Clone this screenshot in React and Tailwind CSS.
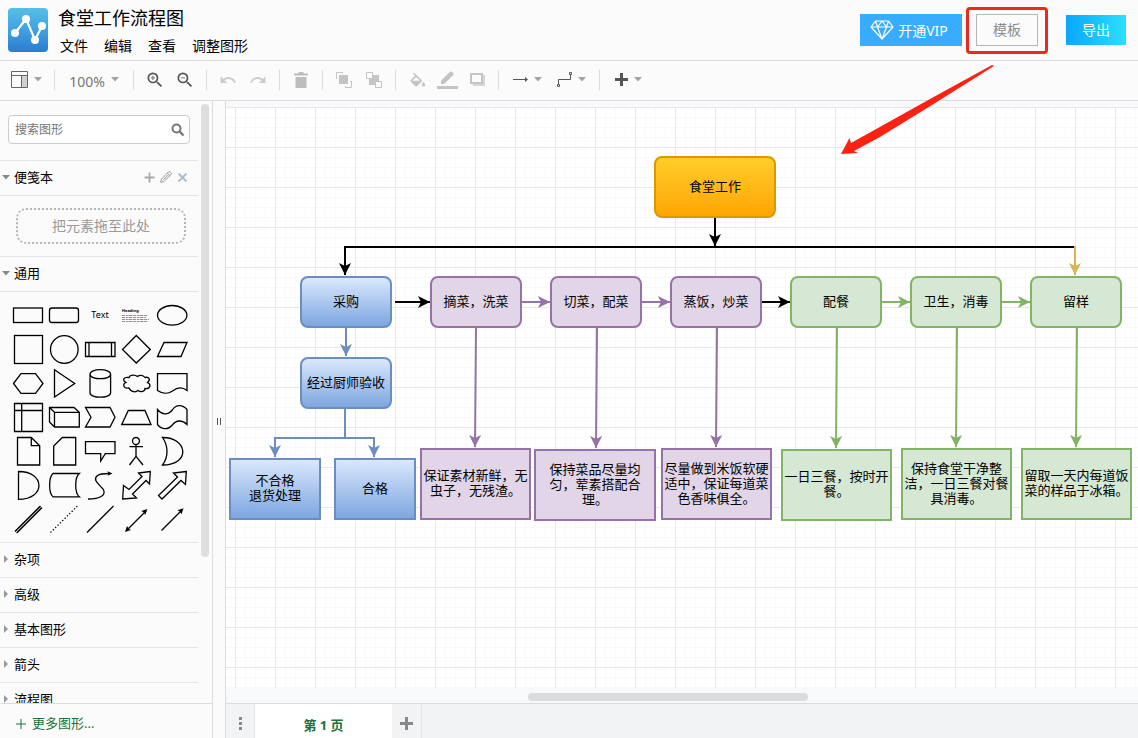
import React from 'react';
import { MdZoomIn, MdZoomOut } from 'react-icons/md';

const menus = ['文件', '编辑', '查看', '调整图形'];

const collapsedSections = ['杂项', '高级', '基本图形', '箭头', '流程图'];

const palettes = {
  orange: 'bg-gradient-to-b from-[#ffcd28] to-[#ffa500] border-[#d79b00]',
  blue: 'bg-gradient-to-b from-[#dae8fc] to-[#7ea6e0] border-[#6c8ebf]',
  purple: 'bg-[#e1d5e7] border-[#9673a6]',
  green: 'bg-[#d5e8d4] border-[#82b366]',
};

// x / y are canvas coordinates, measured from the top left of the grid
const nodes = [
  { x: 428, y: 49, w: 122, h: 62, color: 'orange', rounded: true, text: '食堂工作' },
  { x: 74, y: 169, w: 92, h: 52, color: 'blue', rounded: true, text: '采购' },
  { x: 204, y: 169, w: 92, h: 52, color: 'purple', rounded: true, text: '摘菜，洗菜' },
  { x: 324, y: 169, w: 92, h: 52, color: 'purple', rounded: true, text: '切菜，配菜' },
  { x: 444, y: 169, w: 92, h: 52, color: 'purple', rounded: true, text: '蒸饭，炒菜' },
  { x: 564, y: 169, w: 92, h: 52, color: 'green', rounded: true, text: '配餐' },
  { x: 684, y: 169, w: 92, h: 52, color: 'green', rounded: true, text: '卫生，消毒' },
  { x: 804, y: 169, w: 92, h: 52, color: 'green', rounded: true, text: '留样' },
  { x: 74, y: 250, w: 92, h: 52, color: 'blue', rounded: true, text: '经过厨师验收' },
  { x: 3, y: 351, w: 92, h: 62, color: 'blue', text: '不合格\n退货处理' },
  { x: 108, y: 351, w: 82, h: 62, color: 'blue', text: '合格' },
  { x: 194, y: 341, w: 111, h: 72, color: 'purple', text: '保证素材新鲜，无\n虫子，无残渣。' },
  { x: 308, y: 342, w: 122, h: 72, color: 'purple', text: '保持菜品尽量均\n匀，荤素搭配合\n理。' },
  { x: 435, y: 341, w: 111, h: 72, color: 'purple', text: '尽量做到米饭软硬\n适中，保证每道菜\n色香味俱全。' },
  { x: 555, y: 342, w: 111, h: 72, color: 'green', text: '一日三餐，按时开\n餐。' },
  { x: 675, y: 341, w: 111, h: 72, color: 'green', text: '保持食堂干净整\n洁，一日三餐对餐\n具消毒。' },
  { x: 795, y: 341, w: 111, h: 72, color: 'green', text: '留取一天内每道饭\n菜的样品于冰箱。' },
];

const edgeColors = {
  black: '#000000',
  blue: '#6c8ebf',
  purple: '#9673a6',
  green: '#82b366',
  yellow: '#d6b656',
};

const edges = [
  { d: 'M489 111V139', color: 'black' },
  { d: 'M849 140H119V168', color: 'black' },
  { d: 'M849 139V168', color: 'yellow' },
  { d: 'M169 195H204', color: 'black' },
  { d: 'M296 195H324', color: 'purple' },
  { d: 'M416 195H444', color: 'purple' },
  { d: 'M536 195H564', color: 'black' },
  { d: 'M656 195H684', color: 'green' },
  { d: 'M776 195H804', color: 'green' },
  { d: 'M120 221V249', color: 'blue' },
  { d: 'M119 302V331H49V350', color: 'blue' },
  { d: 'M119 331H148V350', color: 'blue' },
  { d: 'M250 221L249 340', color: 'purple' },
  { d: 'M371 221L370 341', color: 'purple' },
  { d: 'M491 221L490 340', color: 'purple' },
  { d: 'M611 221L610 341', color: 'green' },
  { d: 'M731 221L730 340', color: 'green' },
  { d: 'M851 221L850 340', color: 'green' },
];

// Palette thumbnails, each drawn in a 36 x 34 cell
const shapes = [
  { name: '矩形', art: <rect x="3.5" y="10" width="29" height="14.5" /> },
  { name: '圆角矩形', art: <rect x="3.5" y="10" width="29" height="14.5" rx="2.5" /> },
  { name: '文本', label: 'text' },
  { name: '文本框', label: 'heading' },
  { name: '椭圆', art: <ellipse cx="18.2" cy="17.3" rx="14.7" ry="9.8" /> },
  { name: '正方形', art: <rect x="4.5" y="3.5" width="28" height="28" /> },
  { name: '圆', art: <circle cx="18.3" cy="17.5" r="13.8" /> },
  { name: '流程', art: <path d="M3.5 10.5H33V24.5H3.5zM7 10.5V24.5M29.5 10.5V24.5" /> },
  { name: '菱形', art: <path d="M18.3 3.5L32.3 17.5 18.3 31 4.5 17.5z" /> },
  { name: '平行四边形', art: <path d="M3.5 24.5L10 10.5H33L27 24.5z" /> },
  { name: '六边形', art: <path d="M3.5 17.5L11 7.7H25.5L33 17.5 25.5 27.3H11z" /> },
  { name: '三角形', art: <path d="M8.5 3.8L28.7 17.5 8.5 31z" /> },
  { name: '圆柱体', art: <path d="M8 8.2C8 2.2 28.6 2.2 28.6 8.2V26.7C28.6 32.7 8 32.7 8 26.7zM8 8.2C8 14.2 28.6 14.2 28.6 8.2" /> },
  { name: '云', art: <path d="M11 11.500C6 10.500 3.500 14 8 16.500C4 18 5.500 23 11 22C13 26.500 18 26.500 20 24.500C23 26.500 27 25.500 27 22.500C32.500 23 33.500 18.500 29.500 16.500C33 13.500 31 10.500 27 11.500C25 8.500 21 9 19.500 10.500C17 8.500 12 8.500 11 11.500z" /> },
  { name: '文档', art: <path d="M3.5 7.7H33V24.5C28 20.5 23 21.5 18.5 25C14 28.2 8 27.5 3.5 24.5z" /> },
  { name: '内部存储', art: <path d="M4.5 3.5H32.5V31.5H4.5zM11.7 3.5V31.5M4.5 10.5H32.5" /> },
  { name: '立方体', art: <path d="M3.5 7.5H28L33.3 12.3V27H8.5L3.5 22zM3.5 7.5L8.5 12.3V27M8.5 12.3H33.3" /> },
  { name: '步骤', art: <path d="M3.5 7.5H28L33 17.3 28 27H3.5L9 17.3z" /> },
  { name: '梯形', art: <path d="M3.7 24.5L10.3 10.5H27L33 24.5z" /> },
  { name: '磁带', art: <path d="M3.5 9.5C8 15 14 15.5 18.3 10C22 4.5 28 4 33 9.5V24.5C28 19.5 22 20 18.3 25C14 30 8 30 3.5 24.5z" /> },
  { name: '便签', art: <path d="M7.5 3.5H21.3L29.7 11.7V31H7.5zM21.3 3.5V11.7H29.7" /> },
  { name: '卡片', art: <path d="M16.3 3.5H29.7V31H7.7V12z" /> },
  { name: '标注', art: <path d="M3.5 7.7H33V19.7H23.3L18.7 27V19.7H3.5z" /> },
  { name: '角色', art: <path d="M21.5 7A3.5 3.5 0 1 1 14.5 7A3.5 3.5 0 1 1 21.5 7zM18 10.5V22.3M11.5 12.7H25M18 22.3L11.5 31M18 22.3L25 31" /> },
  { name: '或', art: <path d="M8.5 3.5C34 3.5 37 31 8.5 31C14.5 23 14.5 12 8.5 3.5z" /> },
  { name: '与', art: <path d="M8.5 3.5C35.5 3.5 36 31.3 8.5 31.3z" /> },
  { name: '数据存储', art: <path d="M7 5.5H33.3C28.5 9.5 28.5 25 33.3 28.8H7C2.5 25 2.5 9.5 7 5.5z" /> },
  { name: '曲线', art: <><path d="M6 31C18 31 25 27 21 21C17 16 10 12 15.5 7.5C18 5.7 22 5.5 27 5.5" /><path d="M30.500 5.500L25.500 3.300L26.500 5.500L25.500 7.700z" fill="#000" stroke="none" /></> },
  { name: '双向箭头', art: <path d="M32.300 3.500L20.500 5L24 8.500L11 21.500L5.500 17.500L4.700 31L18.500 30L14.500 26L28 12.500L31.500 16z" /> },
  { name: '箭头', art: <path d="M32.300 3.500L19.500 5L23.500 9L4.500 27.500L8 31L27 12.500L31.500 16.500z" /> },
  { name: '连接', art: <path d="M5 29.500L30.500 4M6.700 31L32 5.500" strokeWidth="1.500" /> },
  { name: '虚线', art: <path d="M4.500 30.500L31.500 4" strokeDasharray="1.300 2" /> },
  { name: '直线', art: <path d="M5 30.500L31.500 4" /> },
  { name: '双向连接', art: <><path d="M9 28L28 9" /><path d="M7 30L9 24L10.500 26.500L13 28zM29.300 7L27.300 13L25.800 10.500L23.300 9z" fill="#000" stroke="none" /></> },
  { name: '定向连接', art: <><path d="M7.500 28.500L27.500 8.500" /><path d="M29.500 6.300L27.500 12.300L26 9.800L23.500 8.300z" fill="#000" stroke="none" /></> },
];

const Caret = ({ className = 'text-[#a3a3a3]' }) => (
  <svg className={`w-2 h-[5px] shrink-0 ${className}`} viewBox="0 0 8 5" fill="currentColor">
    <path d="M0 0H8L4 4.5z" />
  </svg>
);

const CaretRight = () => (
  <svg className="w-2 h-2 shrink-0 text-[#999]" viewBox="0 0 8 8" fill="currentColor">
    <path d="M2 0L6 4L2 8z" />
  </svg>
);

const Logo = () => (
  <svg className="w-10 h-11 shrink-0" viewBox="0 0 40 44">
    <defs>
      <linearGradient id="logoFill" x1="0" y1="0" x2="0" y2="1">
        <stop offset="0" stopColor="#55bfe6" />
        <stop offset="0.5" stopColor="#3fa2e0" />
        <stop offset="1" stopColor="#2e7bd0" />
      </linearGradient>
    </defs>
    <rect width="40" height="44" rx="4" fill="url(#logoFill)" />
    <path d="M7 25L18 11L27 32L34 18" fill="none" stroke="#fff" strokeWidth="2.2" />
    <g fill="#fff">
      <circle cx="7" cy="25" r="4" />
      <circle cx="18" cy="11" r="4" />
      <circle cx="27" cy="32" r="4" />
      <circle cx="34" cy="18" r="4" />
    </g>
  </svg>
);

const DiamondIcon = () => (
  <svg className="w-6 h-5 shrink-0" viewBox="0 0 24 20" fill="none" stroke="#fff" strokeWidth="1.2" strokeLinejoin="round">
    <path d="M5.5 1H18.5L23 7L12 19L1 7zM1 7H23M5.5 1L7.5 7L12 1L16.5 7L18.5 1M7.5 7L12 19L16.5 7" />
  </svg>
);

const ToolGroup = ({ children, first, last }) => (
  <>
    <div className={`flex items-center pr-1.5 ${first ? 'pl-1' : 'pl-1.5'}`}>{children}</div>
    {!last && <div className="w-px h-5 bg-[#dcdcdc]" />}
  </>
);

const ToolButton = ({ label, children, wide }) => (
  <button
    aria-label={label}
    className={`h-8 flex items-center justify-center gap-1.5 ${wide ? 'w-11' : 'w-[30px]'}`}
  >
    {children}
  </button>
);

const Header = () => (
  <header className="h-[61px] shrink-0 border-b border-[#dadce0] flex items-center justify-between pl-2 pr-3">
    <div className="flex items-center gap-2.5">
      <Logo />
      <div className="flex flex-col gap-1 pt-1">
        <h1 className="text-lg leading-6 text-black">食堂工作流程图</h1>
        <nav className="flex gap-4 pl-0.5">
          {menus.map((menu) => (
            <button key={menu} className="text-sm leading-6 text-black">{menu}</button>
          ))}
        </nav>
      </div>
    </div>

    <div className="flex items-center">
      <button className="w-[102px] h-8 pr-1 bg-[#38adff] text-white text-sm flex items-center justify-center gap-1">
        <DiamondIcon />
        <span className="pt-0.5">开通VIP</span>
      </button>
      {/* Highlighted template button */}
      <div className="ml-1 mr-[18px] w-[82px] h-[47px] border-3 border-[#ea2a20] rounded flex items-center justify-center">
        <button className="w-[62px] h-8 border border-[#b5b5b5] text-sm text-[#8c8c8c]">模板</button>
      </div>
      <button className="w-[60px] h-[30px] bg-gradient-to-r from-[#0ba6ff] to-[#2be0fd] text-sm text-white">导出</button>
    </div>
  </header>
);

const Toolbar = () => (
  <div className="h-10 pb-0.5 shrink-0 border-b border-[#dadce0] flex items-center">
    <ToolGroup first>
      <ToolButton label="视图" wide>
        <svg className="w-[17px] h-[17px]" viewBox="0 0 17 17" fill="none" stroke="#666">
          <rect x="10.5" y="4.5" width="6" height="12" fill="#d0d0d0" stroke="none" />
          <path d="M0.5 0.5H16.5V16.5H0.5zM0.5 4.5H16.5M10.5 4.5V16.5" />
        </svg>
        <Caret />
      </ToolButton>
    </ToolGroup>
    <ToolGroup>
      <button className="w-[66px] h-8 flex items-center justify-center gap-1.5">
        <span className="text-sm leading-4 pt-1 text-[#777]">100%</span>
        <Caret />
      </button>
    </ToolGroup>
    <ToolGroup>
      <ToolButton label="放大"><MdZoomIn className="w-5 h-5 text-[#555]" /></ToolButton>
      <ToolButton label="缩小"><MdZoomOut className="w-5 h-5 text-[#555]" /></ToolButton>
    </ToolGroup>
    <ToolGroup>
      <ToolButton label="撤销">
        <svg className="w-[18px] h-[18px]" viewBox="0 0 24 24" fill="#ccc">
          <path d="M12.5 8c-2.650 0-5.050.990-6.900 2.600L2 7v9h9l-3.620-3.620c1.390-1.160 3.160-1.880 5.120-1.880 3.540 0 6.550 2.310 7.600 5.500l2.370-.780C21.080 11.030 17.150 8 12.500 8z" />
        </svg>
      </ToolButton>
      <ToolButton label="重做">
        <svg className="w-[18px] h-[18px]" viewBox="0 0 24 24" fill="#ccc">
          <path d="M18.400 10.600C16.550 8.990 14.150 8 11.500 8c-4.650 0-8.580 3.030-9.960 7.220L3.900 16c1.050-3.190 4.050-5.500 7.600-5.500 1.950 0 3.730.720 5.120 1.880L13 16h9V7l-3.600 3.600z" />
        </svg>
      </ToolButton>
    </ToolGroup>
    <ToolGroup>
      <ToolButton label="删除">
        <svg className="w-3.5 h-4" viewBox="0 0 14 16" fill="#bdbdbd">
          <path d="M0 1.5H4L5 0H9L10 1.5H14V3.5H0zM1.5 5H12.5V16H1.5z" />
        </svg>
      </ToolButton>
    </ToolGroup>
    <ToolGroup>
      <ToolButton label="移至最前">
        <svg className="w-4 h-4" viewBox="0 0 16 16" fill="none" stroke="#c4c4c4">
          <path d="M1.5 6.5H0.5V0.5H6.5V1.5M14 9.5H15.5V15.5H9.5V14" />
          <rect x="3" y="3" width="9" height="9" fill="#c4c4c4" stroke="none" />
        </svg>
      </ToolButton>
      <ToolButton label="移至最后">
        <svg className="w-4 h-4" viewBox="0 0 16 16" stroke="#c4c4c4">
          <rect x="3" y="3" width="10" height="10" fill="#c4c4c4" stroke="none" />
          <path d="M0.5 0.5H6.5V6.5H0.5zM9.5 9.5H15.5V15.5H9.5z" fill="#fbfbfb" />
        </svg>
      </ToolButton>
    </ToolGroup>
    <ToolGroup>
      <ToolButton label="填充颜色">
        <svg className="w-[18px] h-[18px]" viewBox="0 -2 22 22" fill="#c4c4c4">
          <path d="M16.560 8.940L7.620 0 6.210 1.410l2.380 2.380-5.150 5.150a1.490 1.490 0 0 0 0 2.120l5.500 5.500c.290.290.680.440 1.060.440s.770-.150 1.060-.440l5.500-5.500c.590-.580.590-1.530 0-2.120zM5.210 10L10 5.210 14.790 10H5.210zM19 11.500s-2 2.170-2 3.500c0 1.100.900 2 2 2s2-.900 2-2c0-1.330-2-3.500-2-3.500z" />
        </svg>
      </ToolButton>
      <ToolButton label="线条颜色">
        <svg className="w-[21px] h-[18px]" viewBox="0 0 21 18" fill="#c4c4c4">
          <path d="M4 13V9.800L13 0.800Q14 0 15 0.800L16.500 2.300Q17 3 16.200 4L7.200 13zM0 15H21V18H0z" />
        </svg>
      </ToolButton>
      <ToolButton label="阴影">
        <svg className="w-[15px] h-[13px]" viewBox="0 0 15 13">
          <rect x="3" y="2" width="12" height="11" fill="#d6d6d6" />
          <rect x="1" y="1" width="11" height="9" fill="#fbfbfb" stroke="#c4c4c4" strokeWidth="2" />
        </svg>
      </ToolButton>
    </ToolGroup>
    <ToolGroup>
      <ToolButton label="连接" wide>
        <svg className="w-[15px] h-[5px]" viewBox="0 0 15 5" fill="#555">
          <path d="M0 2H12V0L15 2.5L12 5V3H0z" />
        </svg>
        <Caret />
      </ToolButton>
      <ToolButton label="航点" wide>
        <svg className="w-[15px] h-[15px]" viewBox="0 0 15 15" fill="none" stroke="#555">
          <path d="M12.5 0.5H14.5V2.5H12.5zM0.5 12.5H2.5V14.5H0.5zM1.5 12.5V7.5H13.5V3" />
        </svg>
        <Caret />
      </ToolButton>
    </ToolGroup>
    <ToolGroup last>
      <ToolButton label="插入" wide>
        <svg className="w-[13px] h-[13px]" viewBox="0 0 13 13" fill="#555">
          <path d="M5 0H8V5H13V8H8V13H5V8H0V5H5z" />
        </svg>
        <Caret />
      </ToolButton>
    </ToolGroup>
  </div>
);

const SectionTitle = ({ title, open, children }) => (
  <div className="h-[35px] pb-0.5 shrink-0 border-b border-[#e5e5e5] flex items-center justify-between pl-0.5 pr-2.5">
    <button className="flex items-center gap-1 text-[13px] leading-5 text-black" aria-expanded={!!open}>
      {open ? <Caret className="text-[#8a8a8a]" /> : <CaretRight />}
      {title}
    </button>
    {children}
  </div>
);

const ShapeCell = ({ shape }) => (
  <button title={shape.name} aria-label={shape.name} className="w-9 h-[34px] flex items-center justify-center">
    {shape.label === 'text' && <span className="text-[9px] leading-3 text-black">Text</span>}
    {shape.label === 'heading' && (
      <span className="w-7 flex flex-col items-start">
        <span className="text-[4px] leading-[6px] font-bold text-black">Heading</span>
        <svg className="w-7 h-2" viewBox="0 0 28 8" stroke="#544" strokeWidth="0.6" strokeDasharray="3 0.8 2 0.6 4 0.7">
          <path d="M0 1.5H26M0 3.5H24M0 5.5H27M0 7.5H26" />
        </svg>
      </span>
    )}
    {shape.art && (
      <svg className="w-9 h-[34px]" viewBox="0 0 36 34" fill="none" stroke="#000" strokeWidth="1.3">
        {shape.art}
      </svg>
    )}
  </button>
);

const Sidebar = () => (
  <aside className="w-[213px] shrink-0 border-r border-[#dadce0] flex flex-col">
    <div className="flex-1 min-h-0 flex">
      <div className="flex-1 min-w-0 overflow-hidden flex flex-col">
        {/* Search */}
        <div className="h-[60px] shrink-0 border-b border-[#e5e5e5] px-2 pt-3.5">
          <label className="h-[29px] bg-white border border-[#ccc] rounded flex items-center pl-1.5 pr-1">
            <input
              type="text"
              aria-label="搜索图形"
              placeholder="搜索图形"
              className="flex-1 min-w-0 text-xs text-black placeholder:text-[#757575] outline-none bg-transparent"
            />
            <svg className="w-3.5 h-3.5" viewBox="0 0 14 14" fill="none" stroke="#777" strokeWidth="2">
              <circle cx="5.5" cy="5.5" r="4" />
              <path d="M8.5 8.5L12.5 12.5" strokeWidth="2.4" />
            </svg>
          </label>
        </div>

        <SectionTitle title="便笺本" open>
          <div className="flex items-center gap-[5px]">
            <button aria-label="添加">
              <svg className="w-[11px] h-[11px]" viewBox="0 0 11 11" stroke="#aaa" strokeWidth="1.8">
                <path d="M5.5 0.5V10.5M0.5 5.5H10.5" />
              </svg>
            </button>
            <button aria-label="编辑">
              <svg className="w-3 h-3" viewBox="0 0 12 12" fill="none" stroke="#999">
                <path d="M0.7 11.3L1.5 8L8.5 1Q9.5 0.2 10.5 1.2Q11.8 2.5 11 3.5L4 10.5zM7.3 2.2L9.8 4.7M3.5 8.7L8.7 3.5" />
              </svg>
            </button>
            <button aria-label="关闭">
              <svg className="w-[11px] h-[11px]" viewBox="0 0 11 11" stroke="#a9c0d3" strokeWidth="1.9">
                <path d="M1.5 1.5L9.5 9.5M9.5 1.5L1.5 9.5" />
              </svg>
            </button>
          </div>
        </SectionTitle>
        <div className="h-[61px] shrink-0 border-b border-[#e5e5e5] pl-4 pr-3 pt-3">
          <div className="h-9 border-2 border-dotted border-[#b5b5b5] rounded-[10px] flex items-center justify-center text-sm text-[#999]">
            把元素拖至此处
          </div>
        </div>

        <SectionTitle title="通用" open />
        <div className="shrink-0 border-b border-[#e5e5e5] pl-2.5 py-1.5">
          <div className="grid grid-cols-[repeat(5,36px)]">
            {shapes.map((shape) => (
              <ShapeCell key={shape.name} shape={shape} />
            ))}
          </div>
        </div>

        {collapsedSections.map((title) => (
          <SectionTitle key={title} title={title} />
        ))}
      </div>
      {/* Scrollbar */}
      <div className="w-3.5 shrink-0 pl-[3px] pt-[3px]">
        <div className="w-2 h-[453px] rounded bg-[#dedede]" />
      </div>
    </div>

    <button className="h-[35px] shrink-0 border-t border-[#dadce0] flex items-center gap-1.5 pl-4 pt-1.5 text-[13px] text-[#1e7038]">
      <svg className="w-2.5 h-2.5" viewBox="0 0 10 10" stroke="currentColor">
        <path d="M5 0V10M0 5H10" />
      </svg>
      更多图形...
    </button>
  </aside>
);

const Diagram = () => (
  <div className="relative flex-1 min-h-0 overflow-hidden bg-white bg-[linear-gradient(to_right,#e9e9e9_1px,transparent_1px),linear-gradient(to_bottom,#e9e9e9_1px,transparent_1px),linear-gradient(to_right,#f9f9f9_1px,transparent_1px),linear-gradient(to_bottom,#f9f9f9_1px,transparent_1px)] bg-[size:40px_40px,40px_40px,10px_10px,10px_10px] bg-[position:9px_0px]">
    <svg className="absolute inset-0 w-full h-full" fill="none" strokeWidth="2">
      <defs>
        {Object.entries(edgeColors).map(([name, color]) => (
          <marker
            key={name}
            id={`arrow-${name}`}
            markerUnits="userSpaceOnUse"
            markerWidth="13"
            markerHeight="12"
            refX="12"
            refY="6"
            orient="auto"
          >
            <path d="M0 0L12 6L0 12L3 6z" fill={color} />
          </marker>
        ))}
      </defs>
      {edges.map((edge) => (
        <path key={edge.d} d={edge.d} stroke={edgeColors[edge.color]} markerEnd={`url(#arrow-${edge.color})`} />
      ))}
    </svg>

    {nodes.map((node) => (
      <div
        key={node.text}
        className={`absolute border-2 pb-0.5 flex items-center justify-center text-center text-[13px] leading-[15px] whitespace-pre text-black ${palettes[node.color]} ${node.rounded ? 'rounded-lg' : ''}`}
        style={{ left: node.x, top: node.y, width: node.w, height: node.h }}
      >
        {node.text}
      </div>
    ))}
  </div>
);

const PageTabs = () => (
  <div className="h-[35px] shrink-0 border-t border-[#dadce0] bg-[#f1f3f4] flex">
    <button aria-label="页面" className="w-[29px] border-r border-[#e3e5e6] flex items-center justify-center pt-1">
      <svg className="w-[3px] h-[13px]" viewBox="0 0 3 13" fill="#888">
        <path d="M0 0H3V3H0zM0 5H3V8H0zM0 10H3V13H0z" />
      </svg>
    </button>
    <button className="w-[137px] bg-white text-[13px] font-bold text-[#1e7038] pt-2.5">第 1 页</button>
    <button aria-label="添加页面" className="w-[30px] border-r border-[#e3e5e6] flex items-center justify-center pt-1">
      <svg className="w-[13px] h-[13px]" viewBox="0 0 13 13" fill="#888">
        <path d="M5 0H8V5H13V8H8V13H5V8H0V5H5z" />
      </svg>
    </button>
  </div>
);

const App = () => (
  <div className="relative h-screen min-h-[600px] overflow-hidden flex flex-col bg-[#fbfbfb] font-['Noto_Sans','Noto_Sans_CJK_SC',sans-serif]">
    <Header />
    <Toolbar />
    <div className="flex-1 min-h-0 flex">
      <Sidebar />
      {/* Splitter */}
      <div className="w-3 pt-1 shrink-0 flex items-center justify-center gap-0.5">
        <div className="w-px h-[7px] bg-[#555]" />
        <div className="w-px h-[7px] bg-[#555]" />
      </div>
      <main className="flex-1 min-w-0 border-l border-[#dadce0] flex flex-col">
        <div className="h-1.5 shrink-0 bg-[#f8f9fa]" />
        <Diagram />
        <div className="h-[15px] shrink-0 bg-[#f8f9fb] pt-[5px] flex justify-center">
          <div className="w-[280px] h-2 mr-7 rounded bg-[#dcdcdc]" />
        </div>
        <PageTabs />
      </main>
    </div>

    {/* Pointer from the template button to the canvas */}
    <svg className="absolute right-[143px] top-16 w-[155px] h-[91px] pointer-events-none" viewBox="0 0 155 91" fill="#fb2213">
      <path d="M1 90L9.500 74L11 79L38 64L90 35L152 1L154 2L92 41L40 73L14 87L18 89z" />
    </svg>
  </div>
);

export default App;
